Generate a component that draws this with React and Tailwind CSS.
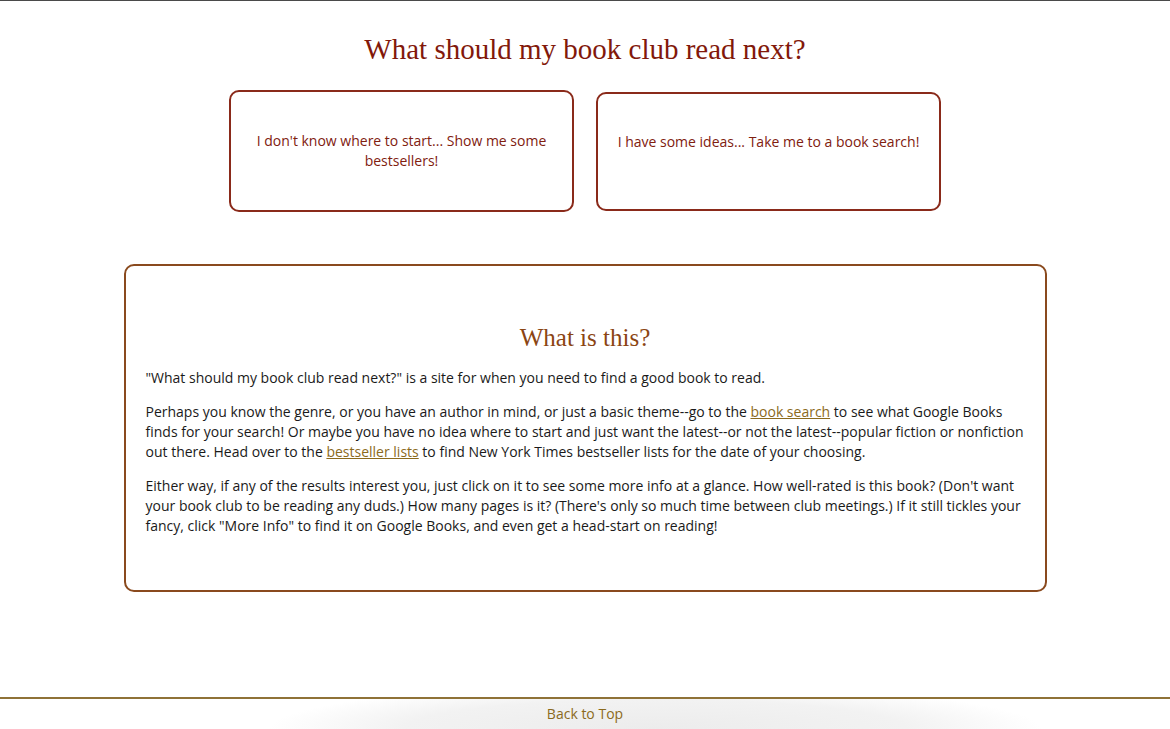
import React from "react";

export default function App() {
  const sans = { fontFamily: '"Open Sans", "Liberation Sans", sans-serif' };
  return (
    <div className="min-h-screen flex flex-col bg-white border-t border-[#4a4a4a]" style={sans}>
      <main className="flex flex-col items-center pt-[28px]">
        <h1 className="text-[29px] leading-[40px] text-[#82180a] font-['Liberation_Serif',serif]">
          What should my book club read next?
        </h1>
        <div className="mt-[21px] flex items-center gap-[22px] h-[122px]">
          <a className="w-[345px] h-[122px] border-2 border-[#8a2a1a] rounded-[10px] flex items-center justify-center text-center px-6 text-[14px] leading-5 text-[#80200f]">
            I don't know where to start... Show me some bestsellers!
          </a>
          <a className="w-[345px] h-[119px] border-2 border-[#8a2a1a] rounded-[10px] flex items-center justify-center text-center px-2 pb-[18px] text-[14px] leading-5 text-[#80200f] whitespace-nowrap">
            I have some ideas... Take me to a book search!
          </a>
        </div>
        <section className="mt-[52px] w-[923px] h-[328px] border-2 border-[#8a4a1e] rounded-[10px] px-[20px] pt-[57px] text-[14px] leading-5 text-[#1a1a1a]">
          <h2 className="text-center text-[25px] leading-[30px] text-[#8b4513] font-['Liberation_Serif',serif] mb-[15px]">
            What is this?
          </h2>
          <p className="mb-[14px]">
            "What should my book club read next?" is a site for when you need to find a good book to read.
          </p>
          <p className="mb-[14px]">
            Perhaps you know the genre, or you have an author in mind, or just a basic theme--go to the{" "}
            <a className="underline text-[#8b6a1c]">book search</a> to see what Google Books finds for your search! Or maybe you have no idea where to start and just want the latest--or not the latest--popular fiction or nonfiction out there. Head over to the{" "}
            <a className="underline text-[#8b6a1c]">bestseller lists</a> to find New York Times bestseller lists for the date of your choosing.
          </p>
          <p>
            Either way, if any of the results interest you, just click on it to see some more info at a glance. How well-rated is this book? (Don't want your book club to be reading any duds.) How many pages is it? (There's only so much time between club meetings.) If it still tickles your fancy, click "More Info" to find it on Google Books, and even get a head-start on reading!
          </p>
        </section>
      </main>
      <footer className="mt-auto border-t-2 border-[#8f7237] h-[32px] flex items-center justify-center bg-[radial-gradient(ellipse_33%_150%_at_56%_100%,#ececec_0%,#f2f2f2_65%,#ffffff_100%)]">
        <a className="text-[14px] leading-5 text-[#8b6a1c] -mt-px">Back to Top</a>
      </footer>
    </div>
  );
}
